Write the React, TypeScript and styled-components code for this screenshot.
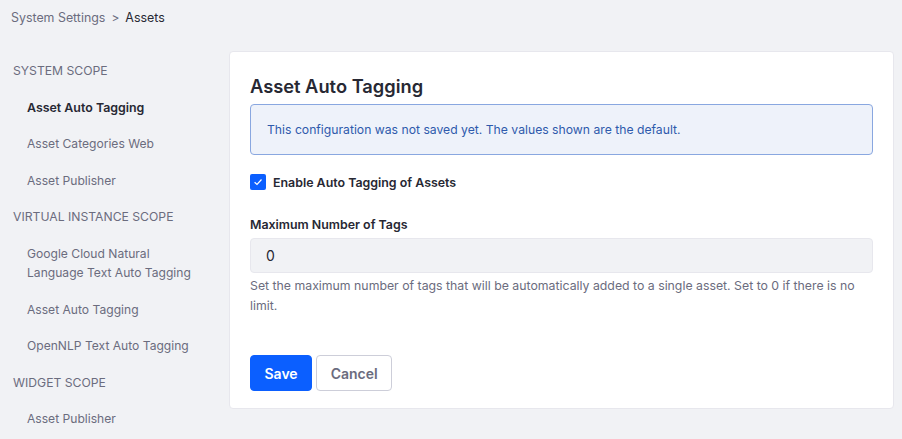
import React from "react";
import styled, { createGlobalStyle } from "styled-components";

const GlobalStyle = createGlobalStyle`
  html, body {
    margin: 0;
    padding: 0;
    background: #f1f2f5;
    font-family: Inter, "Noto Sans", sans-serif;
    -webkit-font-smoothing: antialiased;
  }
`;

type NavItemType = {
  label: string;
  active?: boolean;
};

type NavGroupType = {
  title: string;
  items: NavItemType[];
};

const navGroups: NavGroupType[] = [
  {
    title: "System Scope",
    items: [
      { label: "Asset Auto Tagging", active: true },
      { label: "Asset Categories Web" },
      { label: "Asset Publisher" },
    ],
  },
  {
    title: "Virtual Instance Scope",
    items: [
      { label: "Google Cloud Natural Language Text Auto Tagging" },
      { label: "Asset Auto Tagging" },
      { label: "OpenNLP Text Auto Tagging" },
    ],
  },
  {
    title: "Widget Scope",
    items: [{ label: "Asset Publisher" }],
  },
];

export default function App() {
  return (
    <>
      <GlobalStyle />
      <Page>
        <Breadcrumb>
          <Crumb>System Settings</Crumb>
          <Separator>&gt;</Separator>
          <CurrentCrumb>Assets</CurrentCrumb>
        </Breadcrumb>
        <Layout>
          <Sidebar>
            {navGroups.map((group) => (
              <NavGroup key={group.title}>
                <GroupTitle>{group.title}</GroupTitle>
                {group.items.map((item) => (
                  <NavLink key={item.label} active={item.active}>
                    {item.label}
                  </NavLink>
                ))}
              </NavGroup>
            ))}
          </Sidebar>
          <Card>
            <Title>Asset Auto Tagging</Title>
            <Alert>
              This configuration was not saved yet. The values shown are the
              default.
            </Alert>
            <CheckRow>
              <CheckBox>
                <svg width="10" height="10" viewBox="0 0 10 10">
                  <path
                    d="M1.6 5.3 L4 7.5 L8.5 2.5"
                    fill="none"
                    stroke="#ffffff"
                    strokeWidth="1.2"
                  />
                </svg>
              </CheckBox>
              <CheckLabel>Enable Auto Tagging of Assets</CheckLabel>
            </CheckRow>
            <FieldLabel>Maximum Number of Tags</FieldLabel>
            <Input>0</Input>
            <HelpText>
              Set the maximum number of tags that will be automatically added
              to a single asset. Set to 0 if there is no limit.
            </HelpText>
            <Actions>
              <Button primary>Save</Button>
              <Button>Cancel</Button>
            </Actions>
          </Card>
        </Layout>
      </Page>
    </>
  );
}

const Page = styled.div`
  width: 902px;
  height: 439px;
  overflow: hidden;
  box-sizing: border-box;
`;

const Breadcrumb = styled.div`
  display: flex;
  align-items: center;
  height: 34px;
  padding-left: 11px;
  font-size: 12.4px;
`;

const Crumb = styled.span`
  color: #6b6c7e;
`;

const Separator = styled.span`
  color: #6b6c7e;
  margin: 0 6px;
  font-size: 12px;
`;

const CurrentCrumb = styled.span`
  color: #272833;
`;

const Layout = styled.div`
  display: grid;
  grid-template-columns: 216px 665px;
  padding-left: 13px;
  margin-top: 18px;
`;

const Sidebar = styled.div`
  display: flex;
  flex-direction: column;
  padding-top: 9px;
`;

const NavGroup = styled.div`
  display: flex;
  flex-direction: column;
`;

const GroupTitle = styled.div`
  font-size: 12.2px;
  text-transform: uppercase;
  color: #6b6c7e;
  height: 19px;
  line-height: 19px;
  margin-bottom: 17.6px;
`;

const NavLink = styled.div<{ active?: boolean }>`
  font-size: ${(props) => (props.active ? "12.4px" : "12.1px")};
  line-height: 19px;
  padding-left: 14px;
  padding-right: 30px;
  margin-bottom: 17.6px;
  color: ${(props) => (props.active ? "#272833" : "#6b6c7e")};
  font-weight: ${(props) => (props.active ? 600 : 400)};
`;

const Card = styled.div`
  background: #ffffff;
  border: 1px solid #e7e7ed;
  border-radius: 4px;
  padding: 20px 20px 17px;
  margin-top: -1px;
  height: 358px;
  box-sizing: border-box;
  display: flex;
  flex-direction: column;
`;

const Title = styled.div`
  font-size: 18.3px;
  font-weight: 600;
  color: #272833;
  line-height: 28px;
  margin-bottom: 4px;
`;

const Alert = styled.div`
  background: #eef2fa;
  border: 1px solid #89a7e0;
  border-radius: 4px;
  color: #2e5aac;
  font-size: 12.2px;
  height: 51px;
  box-sizing: border-box;
  display: flex;
  align-items: center;
  padding: 0 16px;
`;

const CheckRow = styled.div`
  display: flex;
  align-items: center;
  margin-top: 19px;
`;

const CheckBox = styled.div`
  width: 16px;
  height: 16px;
  border-radius: 2px;
  background: #0b5fff;
  display: flex;
  align-items: center;
  justify-content: center;
  margin-right: 7px;
`;

const CheckLabel = styled.span`
  font-size: 12.4px;
  font-weight: 600;
  color: #272833;
`;

const FieldLabel = styled.div`
  font-size: 12.4px;
  font-weight: 600;
  color: #272833;
  margin-top: 26px;
  line-height: 18px;
  margin-bottom: 4px;
`;

const Input = styled.div`
  height: 35px;
  box-sizing: border-box;
  background: #f1f2f5;
  border: 1px solid #e7e7ed;
  border-radius: 4px;
  display: flex;
  align-items: center;
  padding: 0 15px;
  font-size: 14px;
  color: #272833;
`;

const HelpText = styled.div`
  font-size: 12.3px;
  line-height: 20px;
  color: #6b6c7e;
  margin-top: 3px;
`;

const Actions = styled.div`
  display: flex;
  gap: 4px;
  margin-top: auto;
`;

const Button = styled.button<{ primary?: boolean }>`
  height: 36px;
  box-sizing: border-box;
  padding: 0 13.5px;
  border-radius: 4px;
  font-family: inherit;
  font-size: 14px;
  font-weight: 600;
  cursor: pointer;
  background: ${(props) => (props.primary ? "#0b5fff" : "#ffffff")};
  color: ${(props) => (props.primary ? "#ffffff" : "#6b6c7e")};
  border: 1px solid ${(props) => (props.primary ? "#0b5fff" : "#cdced9")};
`;
